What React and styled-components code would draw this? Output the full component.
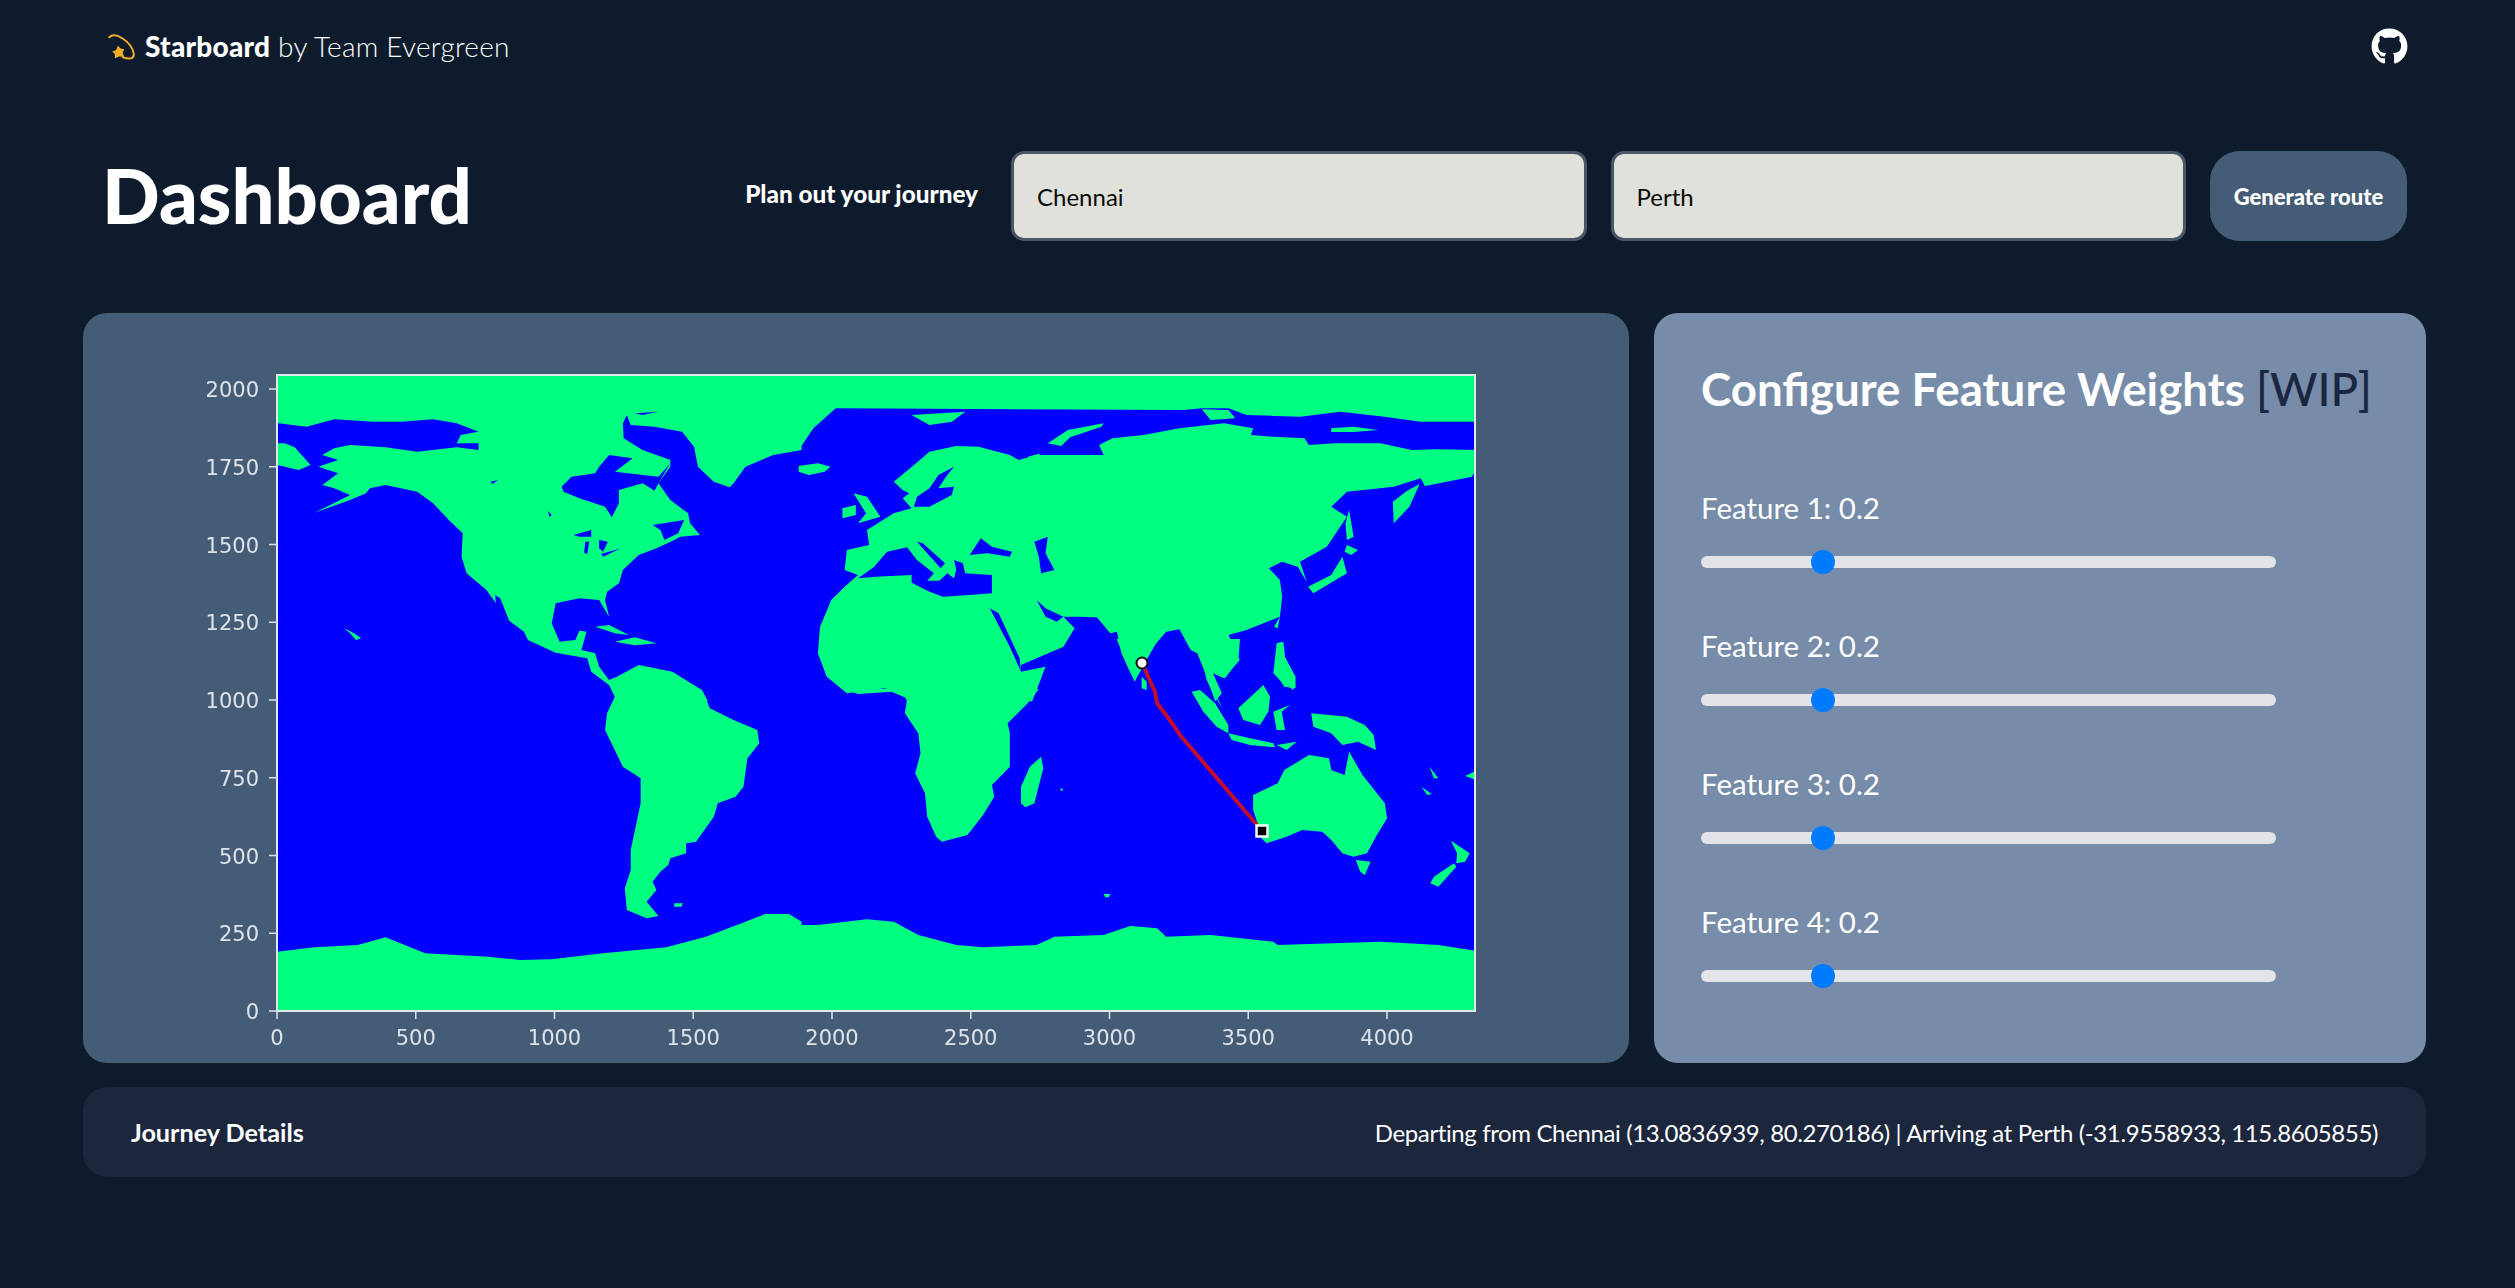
import React from 'react';
import styled, { createGlobalStyle } from 'styled-components';
import { FaGithub } from 'react-icons/fa';

const Global = createGlobalStyle`
  html, body { margin: 0; padding: 0; background: #0e1b2c; }
  body { font-family: "Lato", "Open Sans", sans-serif; color: #fff; }
  * { box-sizing: border-box; }
`;

const Page = styled.div`
  width: 2515px;
  height: 1288px;
  padding: 0 89px 0 83px;
  display: flex;
  flex-direction: column;
  background: #0e1b2c;
`;
const Nav = styled.header`
  height: 92px;
  padding: 0 18px 0 25px;
  display: flex;
  align-items: center;
  justify-content: space-between;
`;
const Brand = styled.div`
  display: flex;
  align-items: center;
  gap: 9px;
  font-size: 28px;
  font-weight: 300;
  letter-spacing: 0.25px;
  b { font-weight: 900; }
`;
const GithubLink = styled.a`
  display: flex;
  color: #fff;
  font-size: 37px;
`;
const TitleRow = styled.section`
  height: 90px;
  margin-top: 59px;
  padding: 0 19px 0 19px;
  display: flex;
  align-items: center;
`;
const Heading = styled.h1`
  margin: 0 auto 2px 0;
  font-size: 76px;
  font-weight: 900;
  line-height: 1;
`;
const PlanLabel = styled.label`
  margin: 0 33px 6px 0;
  font-size: 24.3px;
  font-weight: 900;
`;
const CityInput = styled.input`
  width: 575.5px;
  height: 90px;
  margin-right: 24px;
  padding: 0 23px;
  border: 3px solid #4a5567;
  border-radius: 13px;
  background: #e0e1db;
  color: #0b0b0b;
  font-family: inherit;
  font-size: 24px;
  outline: none;
`;
const GenerateButton = styled.button`
  width: 197px;
  height: 90px;
  border: none;
  border-radius: 30px;
  background: #455c76;
  color: #fff;
  font-family: inherit;
  font-size: 22px;
  font-weight: 900;
`;
const Main = styled.main`
  margin-top: 72px;
  display: grid;
  grid-template-columns: 1546px 772px;
  gap: 25px;
  height: 750px;
`;
const MapCard = styled.div`
  padding: 47px 0 0 97px;
  border-radius: 24px;
  background: #455c76;
  overflow: hidden;
`;
const MapSvg = styled.svg`
  display: block;
  width: 1320px;
  height: 700px;
`;
const TickText = styled.text`
  font-family: "DejaVu Sans", sans-serif;
  font-size: 21px;
  fill: #dde3e9;
`;
const WeightsCard = styled.aside`
  padding: 47px 0 0 47px;
  border-radius: 24px;
  background: #778ca8;
`;
const WeightsTitle = styled.h2`
  margin: 0 0 70px;
  height: 58px;
  font-size: 45.7px;
  line-height: 58px;
  font-weight: 700;
  white-space: nowrap;
  span { color: #1a2740; font-weight: 500; }
`;
const Feature = styled.div`
  height: 138px;
  display: flex;
  flex-direction: column;
`;
const FeatureLabel = styled.label`
  height: 40px;
  font-size: 29.5px;
  line-height: 40px;
  margin-bottom: 28px;
`;
const Slider = styled.input`
  -webkit-appearance: none;
  appearance: none;
  display: block;
  width: 575px;
  height: 12px;
  margin: 0;
  border-radius: 6px;
  background: #e2e4e8;
  outline: none;
  &::-webkit-slider-thumb {
    -webkit-appearance: none;
    width: 24px;
    height: 24px;
    border-radius: 50%;
    background: #007bff;
    border: none;
  }
`;
const DetailBar = styled.footer`
  margin-top: 24px;
  height: 90px;
  padding: 0 48px;
  display: flex;
  align-items: center;
  justify-content: space-between;
  border-radius: 24px;
  background: #1c263c;
  font-size: 24px;
`;
const DetailTitle = styled.strong`
  font-size: 25.2px;
  font-weight: 700;
`;
const DetailText = styled.span`
  letter-spacing: -0.38px;
`;

/* Land outlines, each set traced in a local frame: [ox, oy, sx, sy] maps to page pixels. */
const NW = [180, 360, 620 / 1568, 1 / 3];
const NE = [800, 360, 700 / 1568, 1 / 3];
const SW = [180, 690, 620 / 1568, 1 / 3];
const SE = [800, 690, 700 / 1568, 1 / 3];
const SEA = [1100, 640, 1 / 3, 1 / 3];

const LAND = [
  [NW, '246,46 1572,46 1572,270 1500,285 1430,320 1400,370 1390,382 1350,365 1310,320 1300,260 1270,215 1200,200 1140,195 1130,165 1120,190 1122,235 1170,270 1240,300 1240,320 1210,370 1240,420 1285,460 1290,490 1315,525 1265,530 1250,540 1205,565 1160,585 1120,630 1110,670 1080,695 1075,720 1085,770 1060,720 1010,715 950,730 940,790 960,845 1000,840 1010,812 1028,815 1015,870 1050,880 1060,920 1085,960 1105,950 1160,915 1245,935 1320,990 1335,1024 1105,1024 1085,975 1040,935 1030,895 950,878 880,840 870,815 830,780 775,690 725,640 712,590 715,520 680,480 640,430 600,395 520,375 480,385 470,400 430,420 395,435 340,458 375,438 430,405 390,385 360,375 400,340 350,320 400,300 360,285 390,265 430,255 520,262 600,275 700,262 755,270 755,250 700,250 710,225 755,215 700,190 640,178 560,185 490,185 390,178 320,200 250,190 246,190'],
  [NW, '246,250 265,250 290,262 330,315 300,330 246,315'],
  [NW, '1050,800 1085,795 1135,825 1100,820'],
  [NW, '1100,845 1150,832 1205,850 1150,856'],
  [NW, '415,805 440,820 458,835 445,840 430,820'],
  [SW, '1108,0 1320,0 1340,55 1400,90 1460,120 1465,160 1435,205 1425,290 1405,320 1360,340 1350,380 1305,455 1280,460 1280,490 1240,505 1235,525 1215,545 1195,575 1205,600 1180,635 1210,678 1180,685 1130,660 1125,595 1140,540 1140,480 1165,340 1165,265 1120,230 1075,120 1080,70'],
  [SW, '1250,640 1272,640 1268,650 1250,650'],
  [SW, '246,785 340,772 450,765 520,742 620,790 780,800 860,810 940,808 1070,790 1230,772 1330,740 1430,695 1480,672 1540,672 1572,695 1572,966 246,966'],
  [SE, '-3,705 40,705 150,688 210,695 265,735 350,765 410,772 530,765 570,740 680,735 740,708 800,715 820,740 920,735 1060,755 1070,765 1300,755 1430,765 1512,782 1512,966 -3,966'],
  [NE, '-3,46 1512,46 1512,185 1390,185 1310,170 1210,155 1120,170 1000,165 960,145 900,145 860,150 80,145 30,205 -3,270'],
  [NE, '1512,270 1430,268 1370,270 1300,250 1200,250 1140,255 1130,235 1060,230 1010,225 1015,205 950,190 850,205 770,225 700,235 670,255 680,285 600,285 530,285 490,300 470,285 400,260 350,258 290,275 260,310 210,365 230,390 245,400 230,415 250,445 210,460 150,510 155,555 105,570 100,630 130,645 100,680 70,720 45,800 40,880 60,950 105,1000 190,985 235,1010 240,1024 520,1024 530,990 550,920 495,935 495,915 590,860 615,805 590,770 620,770 665,772 695,820 710,815 720,880 750,965 765,910 785,870 820,815 850,808 875,870 890,880 905,930 930,1024 945,1000 925,940 950,955 985,900 960,825 1000,810 1075,770 1080,710 1075,660 1050,625 1080,605 1115,620 1135,665 1120,605 1180,560 1225,470 1190,440 1225,395 1330,380 1390,355 1400,378 1505,350 1512,335'],
  [NE, '1230,450 1240,530 1225,540 1222,490'],
  [NE, '1225,555 1250,570 1235,585 1220,575'],
  [NE, '1215,590 1225,640 1150,700 1138,680 1190,645'],
  [NE, '1388,372 1365,440 1330,490 1328,425 1360,392'],
  [NE, '1075,770 1070,805 1062,800'],
  [NE, '1075,845 1085,890 1110,950 1110,985 1085,980 1065,940'],
  [NE, '250,165 370,155 340,185 290,195'],
  [NE, '555,250 600,210 680,190 675,200 605,232 585,258'],
  [NE, '-3,318 40,310 68,320 55,335 20,345 -3,335'],
  [NE, '120,400 150,410 180,470 130,490 148,460'],
  [NE, '95,445 125,435 125,465 95,475'],
  [NE, '1190,205 1240,200 1295,210 1240,216 1190,216'],
  [NE, '510,290 540,280 520,300'],
  [NE, '900,148 960,150 975,175 920,180'],
  [SE, '100,-3 535,-3 510,40 465,100 470,130 470,230 430,285 435,320 410,375 375,435 318,455 305,440 285,380 280,310 258,250 270,190 265,130 235,70 240,25 205,5 130,12'],
  [SE, '540,200 545,235 525,340 505,352 495,340 495,290 515,230'],
  [SE, '1015,315 1070,280 1085,240 1140,195 1185,205 1190,240 1220,255 1230,185 1260,255 1310,340 1315,385 1290,440 1270,490 1240,500 1215,490 1190,450 1170,425 1125,420 1090,440 1045,460 1030,440 1025,400 1015,360'],
  [SE, '1245,510 1278,515 1265,555 1255,545'],
  [SE, '1465,520 1470,530 1430,590 1412,580 1420,560'],
  [SE, '1458,452 1500,490 1490,515 1470,520 1472,490'],
  [SE, '1145,70 1225,80 1265,105 1285,135 1290,180 1250,155 1215,165 1190,130 1150,110'],
  [SE, '1410,230 1430,265 1420,265'],
  [SE, '1392,290 1415,312 1405,315'],
  [SE, '1490,258 1510,245 1510,268'],
  [SE, '680,612 695,612 692,622 684,622'],
  [SE, '582,296 590,296 586,304'],
  [SEA, '50,-3 175,-3 105,122 85,85'],
  [SEA, '125,110 140,125 140,150 125,145'],
  [SEA, '260,-3 420,-3 415,60 375,115 345,75 310,60 325,100 350,170 368,205 345,170 320,120 305,50'],
  [SEA, '275,155 300,150 345,190 385,255 385,280 350,260 310,215'],
  [SEA, '385,280 450,295 520,310 525,322 450,315 395,300'],
  [SEA, '530,315 590,305 560,330'],
  [SEA, '415,205 490,135 510,170 505,215 480,255 430,240'],
  [SEA, '520,215 570,195 545,215 555,270 530,270'],
  [SEA, '530,10 550,5 555,50 585,110 580,150 545,125 520,100'],
];

const WATER = [
  [NW, '965,380 990,350 1050,340 1060,320 1085,285 1145,295 1100,335 1210,350 1240,310 1215,360 1200,392 1170,370 1110,390 1110,430 1092,472 1075,440 1010,415 970,395'],
  [NW, '995,525 1040,510 1040,530 1010,530'],
  [NW, '1025,545 1035,545 1030,582 1022,578'],
  [NW, '1060,540 1082,545 1070,575 1060,565'],
  [NW, '1065,582 1115,565 1070,590'],
  [NW, '930,452 940,465 935,472'],
  [NW, '785,365 805,360 790,372'],
  [NW, '1195,495 1275,480 1260,520 1225,540 1215,510'],
  [NW, '797,705 810,715 835,790 825,785 800,745'],
  [NW, '1150,160 1210,155 1170,165'],
  [NW, '640,445 650,445 652,465 642,462'],
  [NE, '345,320 330,345 310,385 345,380 340,405 290,440 255,440 262,410 290,385 310,345'],
  [NE, '130,655 165,622 195,575 240,562 262,600 300,640 285,662 250,645 250,668 290,695 320,710 380,705 430,700 430,645 370,640 365,610 345,600 350,630 345,655 330,640 312,662 285,662 250,645 170,650'],
  [NE, '262,545 275,550 325,610 315,625'],
  [NE, '380,585 405,535 430,560 475,575 470,590 420,580'],
  [NE, '525,545 555,530 550,580 570,630 540,640 535,590'],
  [NE, '425,745 445,760 492,895 495,935 470,860'],
  [NE, '530,720 550,745 590,770 575,785 550,770'],
];

const RIGHT = 1475, LEFT = 277, TOP = 375, BOTTOM = 1011;
const xTicks = [0, 500, 1000, 1500, 2000, 2500, 3000, 3500, 4000];
const yTicks = [0, 250, 500, 750, 1000, 1250, 1500, 1750, 2000];
const xPos = v => LEFT + v * 0.2775;
const yPos = v => BOTTOM - v * 0.311;

const Shape = ({ frame, points, fill }) => {
  const [ox, oy, sx, sy] = frame;
  return <polygon transform={`translate(${ox} ${oy}) scale(${sx} ${sy})`} points={points} fill={fill} />;
};

const WorldChart = () => (
  <MapSvg viewBox="180 360 1320 700">
    <defs>
      <clipPath id="plot"><rect x={LEFT} y={TOP} width={RIGHT - LEFT} height={BOTTOM - TOP} /></clipPath>
      <filter id="soft" x="-2%" y="-2%" width="104%" height="104%"><feGaussianBlur stdDeviation="0.5" /></filter>
    </defs>
    <g filter="url(#soft)">
      <g clipPath="url(#plot)">
        <rect x={LEFT} y={TOP} width={RIGHT - LEFT} height={BOTTOM - TOP} fill="#0000ff" />
        {LAND.map(([f, p], i) => <Shape key={i} frame={f} points={p} fill="#00ff80" />)}
        {WATER.map(([f, p], i) => <Shape key={i} frame={f} points={p} fill="#0000ff" />)}
        <polyline points="1142,663 1155,692 1157,703 1172,723 1180,735 1257,825" fill="none" stroke="#c3102c" strokeWidth="4" strokeLinejoin="round" />
        <circle cx="1142" cy="663" r="5.5" fill="#fff" stroke="#111" strokeWidth="2" />
        <rect x="1256.5" y="825.5" width="11" height="11" fill="#000" stroke="#fff" strokeWidth="2.5" />
      </g>
      <rect x={LEFT} y={TOP} width={RIGHT - LEFT} height={BOTTOM - TOP} fill="none" stroke="#dde8ea" strokeWidth="2" />
      {xTicks.map(v => (
        <g key={v}>
          <line x1={xPos(v)} x2={xPos(v)} y1={BOTTOM} y2={BOTTOM + 8} stroke="#dde3e9" strokeWidth="1.5" />
          <TickText x={xPos(v)} y={1045} textAnchor="middle">{v}</TickText>
        </g>
      ))}
      {yTicks.map(v => (
        <g key={v}>
          <line x1={LEFT - 8} x2={LEFT} y1={yPos(v)} y2={yPos(v)} stroke="#dde3e9" strokeWidth="1.5" />
          <TickText x={259} y={yPos(v) + 8} textAnchor="end">{v}</TickText>
        </g>
      ))}
    </g>
  </MapSvg>
);

const Logo = () => (
  <svg width="28" height="28" viewBox="143 96 84 86">
    <path d="M146 112 C165 92 215 128 221 162 C224 180 205 180 188 174" fill="none" stroke="#f2ad2b" strokeWidth="6" strokeLinecap="round" />
    <path d="M172 138 L181 147 L192 149 L187 160 L192 173 L176 171 L163 177 L163 164 L155 156 L167 151 Z" fill="#f2ad2b" />
  </svg>
);

const FEATURES = [1, 2, 3, 4];

export default function App() {
  return (
    <>
      <Global />
      <Page>
        <Nav>
          <Brand>
            <Logo />
            <span><b>Starboard</b> by Team Evergreen</span>
          </Brand>
          <GithubLink href="#"><FaGithub /></GithubLink>
        </Nav>
        <TitleRow>
          <Heading>Dashboard</Heading>
          <PlanLabel>Plan out your journey</PlanLabel>
          <CityInput defaultValue="Chennai" />
          <CityInput defaultValue="Perth" />
          <GenerateButton>Generate route</GenerateButton>
        </TitleRow>
        <Main>
          <MapCard><WorldChart /></MapCard>
          <WeightsCard>
            <WeightsTitle>Configure Feature Weights <span>[WIP]</span></WeightsTitle>
            {FEATURES.map(n => (
              <Feature key={n}>
                <FeatureLabel>Feature {n}: 0.2</FeatureLabel>
                <Slider type="range" min="0" max="1" step="0.1" defaultValue="0.2" />
              </Feature>
            ))}
          </WeightsCard>
        </Main>
        <DetailBar>
          <DetailTitle>Journey Details</DetailTitle>
          <DetailText>Departing from Chennai (13.0836939, 80.270186) | Arriving at Perth (-31.9558933, 115.8605855)</DetailText>
        </DetailBar>
      </Page>
    </>
  );
}
